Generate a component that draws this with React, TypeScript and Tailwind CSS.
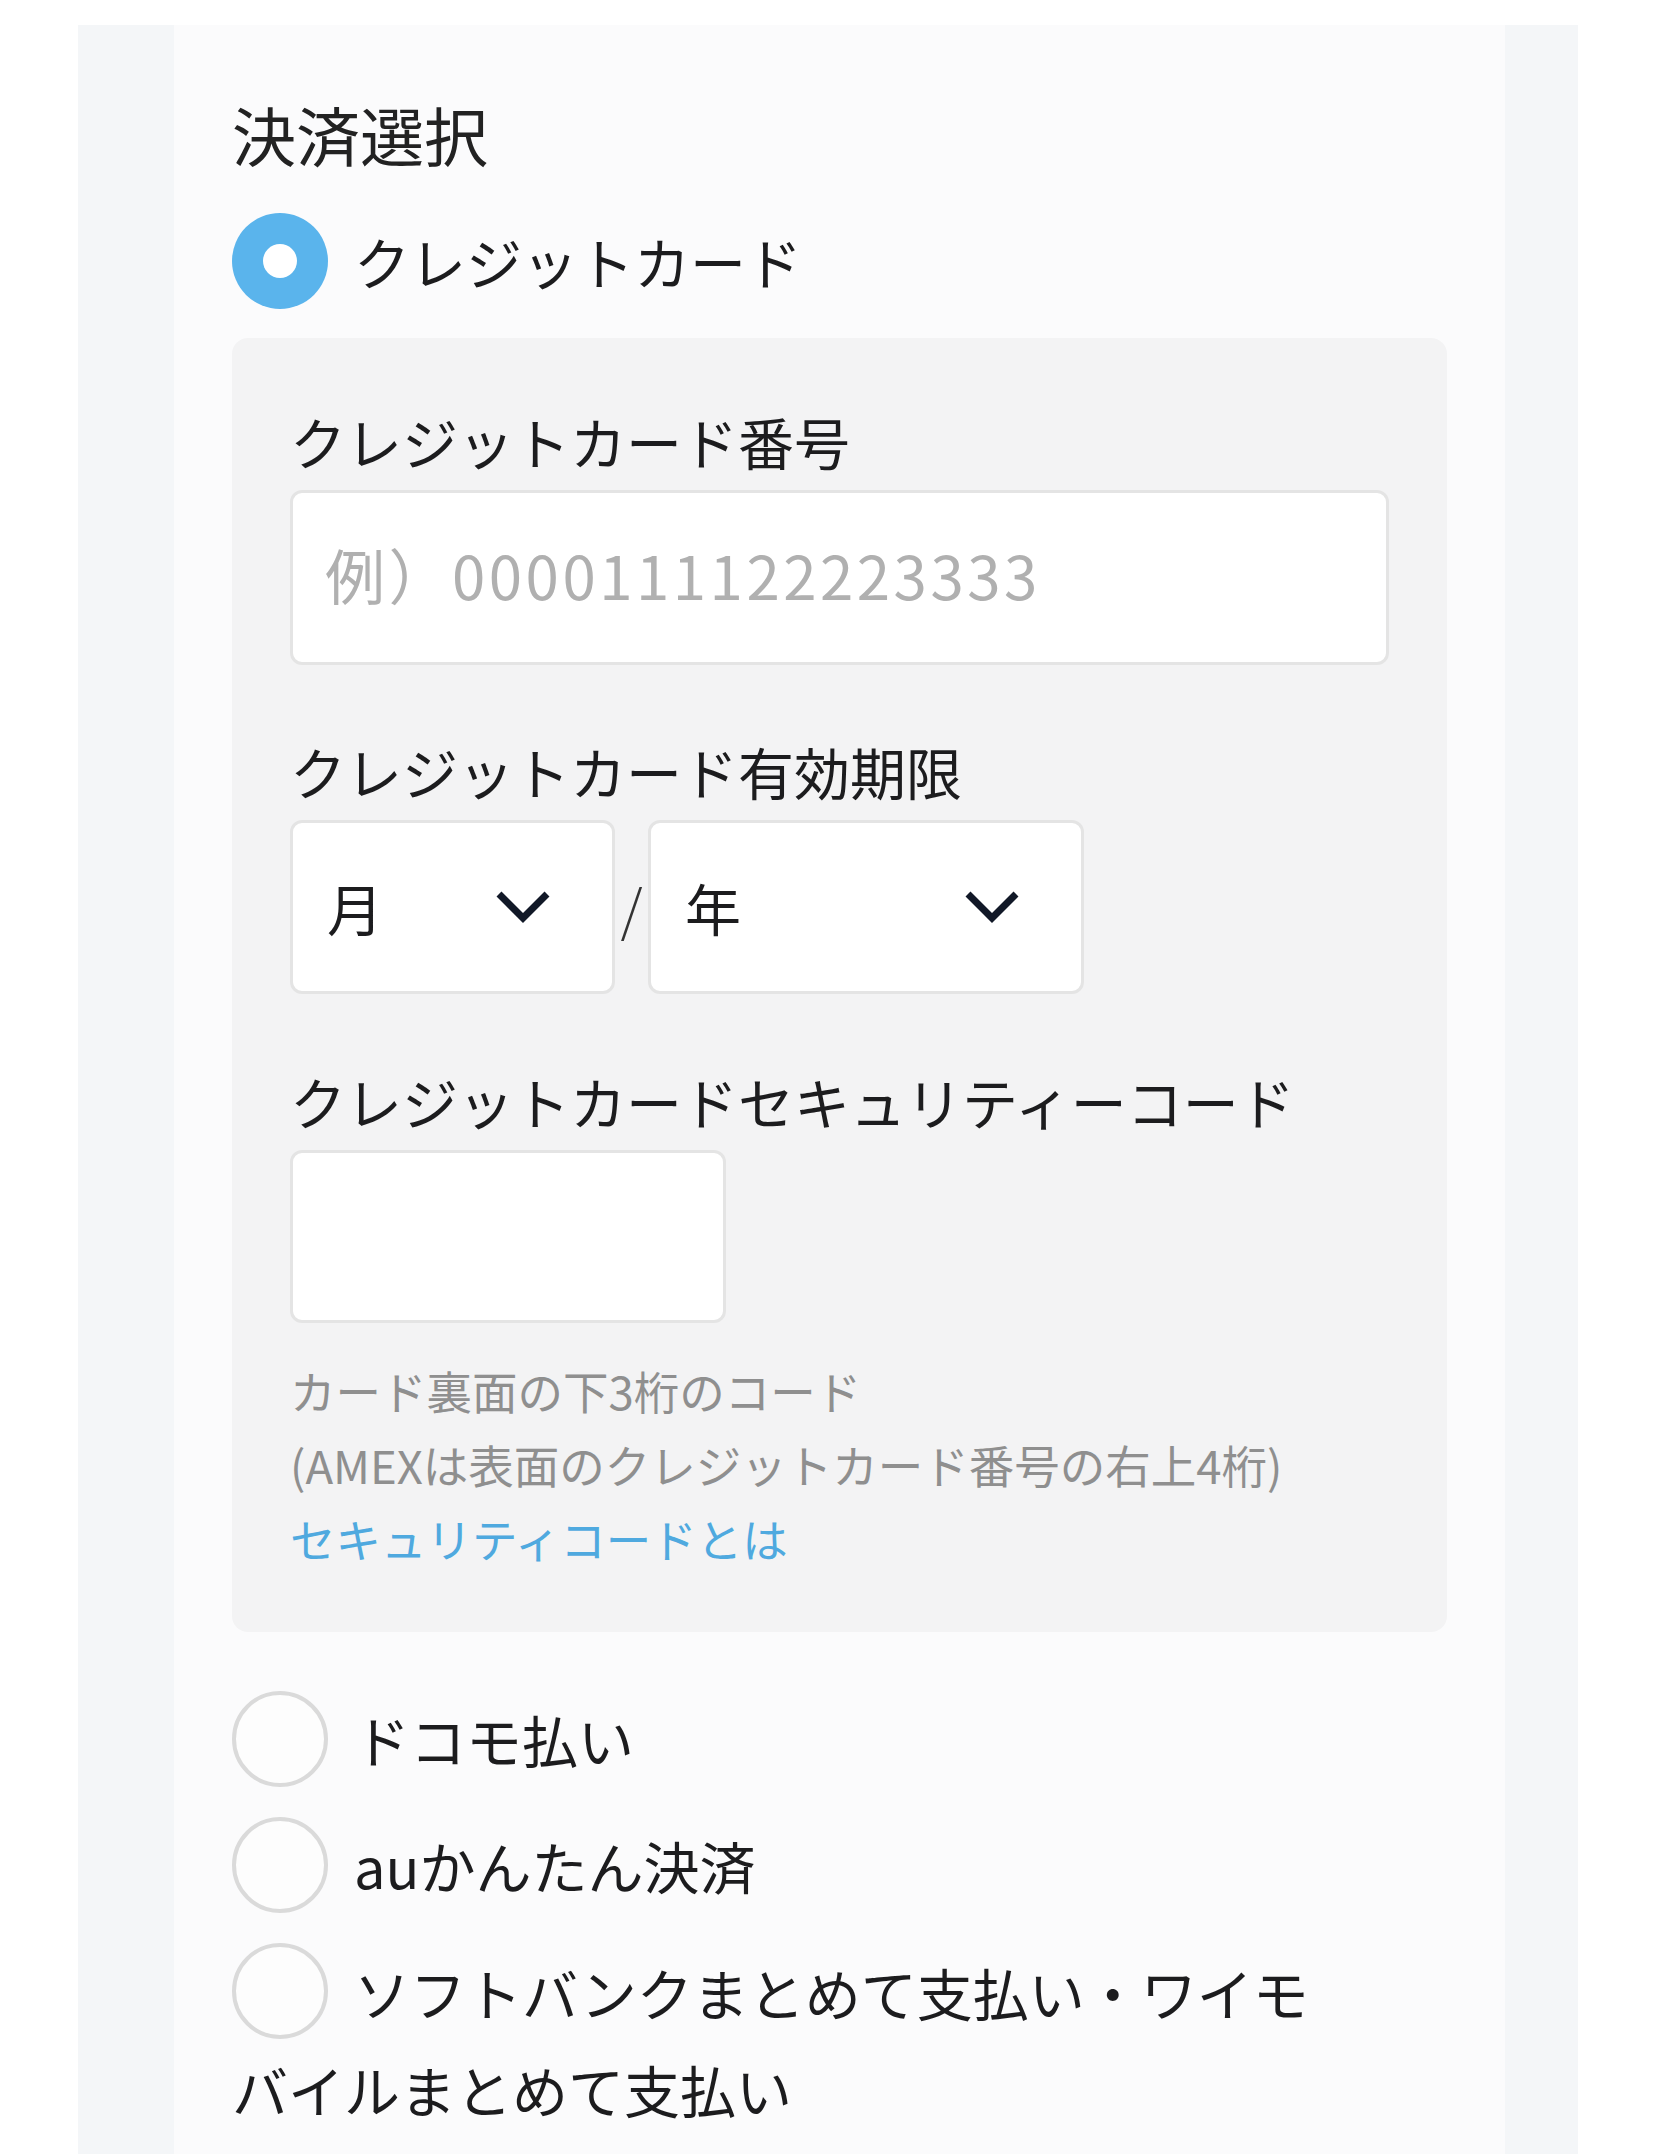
import React from "react";

const font = "font-['Noto_Sans_CJK_JP','Noto_Sans',sans-serif]";

const Chevron = () => (
  <svg width="56" height="34" viewBox="0 0 56 34" fill="none">
    <polyline points="4,4 28,28 52,4" stroke="#111827" strokeWidth="7" />
  </svg>
);

const Radio = ({ checked = false }: { checked?: boolean }) =>
  checked ? (
    <span className="flex h-[96px] w-[96px] shrink-0 items-center justify-center rounded-full bg-[#5ab4ec]">
      <span className="h-[34px] w-[34px] rounded-full bg-white" />
    </span>
  ) : (
    <span className="block h-[96px] w-[96px] shrink-0 rounded-full border-[4px] border-[#dadada] bg-[#fdfdfd]" />
  );

const SelectBox = ({ label, width }: { label: string; width: string }) => (
  <div
    className={`flex h-[174px] items-center justify-between rounded-[12px] border-[3px] border-[#e4e4e4] bg-white pl-[34px] pr-[61px] ${width}`}
  >
    <span className="text-[56px] leading-none text-[#1c1c1e]">{label}</span>
    <Chevron />
  </div>
);

export default function App() {
  return (
    <div className={`min-h-[2154px] bg-white pt-[25px] ${font}`}>
      <div className="ml-[78px] flex min-h-[2129px] w-[1500px] bg-[#f4f6f8] pl-[96px] pr-[73px]">
        <div className="flex-1 bg-[#fbfbfc] px-[58px] pt-[68px]">
          <h2 className="text-[64px] font-normal leading-[80px] text-[#222]">決済選択</h2>

          <label className="mt-[40px] flex items-center gap-[26px]">
            <Radio checked />
            <span className="text-[56px] leading-[72px] text-[#1c1c1e]">クレジットカード</span>
          </label>

          <div className="mt-[29px] rounded-[16px] bg-[#f3f3f4] px-[58px] pb-[57px] pt-[67px]">
            <p className="text-[56px] leading-[72px] text-[#1c1c1e]">クレジットカード番号</p>
            <input
              type="text"
              placeholder="例）0000111122223333"
              className="mt-[13px] h-[175px] w-full rounded-[12px] border-[3px] border-[#e4e4e4] bg-white pb-[8px] pl-[32px] text-[60px] tracking-[3.5px] text-[#1c1c1e] outline-none placeholder:text-[#b0b0b0]"
            />

            <p className="mt-[70px] text-[56px] leading-[72px] text-[#1c1c1e]">クレジットカード有効期限</p>
            <div className="mt-[13px] flex items-center">
              <SelectBox label="月" width="w-[325px]" />
              <span className="w-[33px] text-center text-[56px] font-light leading-none text-[#333]">/</span>
              <SelectBox label="年" width="w-[436px]" />
            </div>

            <p className="mt-[71px] text-[56px] leading-[72px] text-[#1c1c1e]">
              クレジットカードセキュリティーコード
            </p>
            <input
              type="text"
              className="mt-[13px] block h-[173px] w-[436px] rounded-[12px] border-[3px] border-[#e4e4e4] bg-white px-[32px] text-[56px] outline-none"
            />

            <div className="mt-[30px] text-[45.5px] leading-[74px] text-[#8f8f8f]">
              <p>カード裏面の下3桁のコード</p>
              <p>(AMEXは表面のクレジットカード番号の右上4桁)</p>
              <a href="#" className="block text-[#4fa9df]">
                セキュリティコードとは
              </a>
            </div>
          </div>

          <label className="mt-[59px] flex items-center gap-[26px]">
            <Radio />
            <span className="text-[56px] leading-[72px] text-[#1c1c1e]">ドコモ払い</span>
          </label>

          <label className="mt-[30px] flex items-center gap-[26px]">
            <Radio />
            <span className="text-[56px] leading-[72px] text-[#1c1c1e]">auかんたん決済</span>
          </label>

          <label className="mt-[30px] block max-w-[1110px] text-[56px] leading-[97px] text-[#1c1c1e]">
            <span className="float-left mr-[26px]">
              <Radio />
            </span>
            ソフトバンクまとめて支払い・ワイモバイルまとめて支払い
          </label>
        </div>
      </div>
    </div>
  );
}
